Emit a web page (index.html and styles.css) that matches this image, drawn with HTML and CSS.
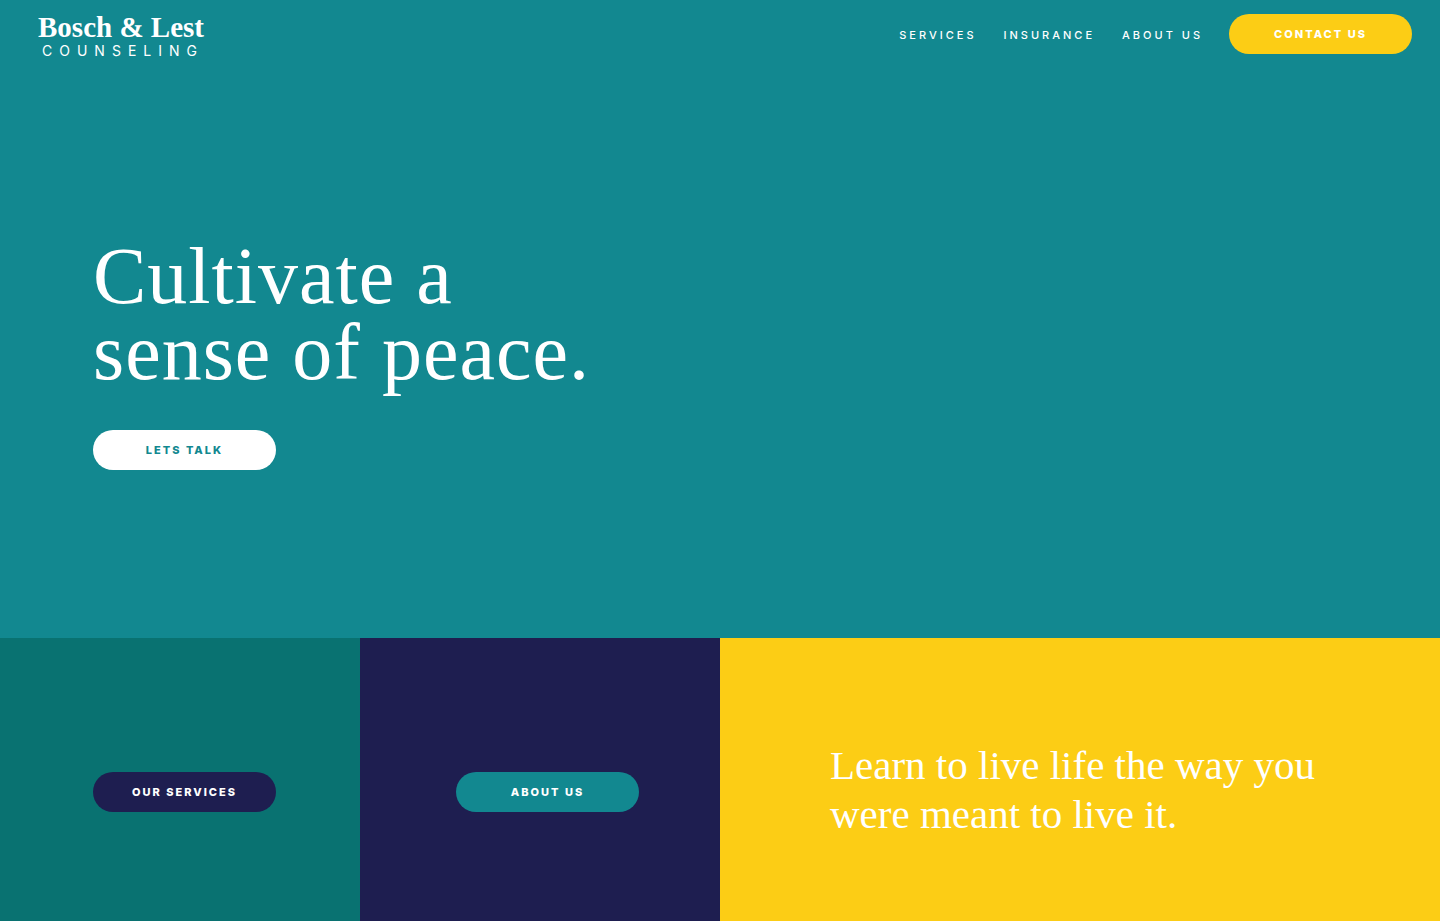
FILE: index.html
```html
<!DOCTYPE html>
<html lang="en">
<head>
    <meta charset="UTF-8">
    <meta name="viewport" content="width=device-width, initial-scale=1.0">
    <title>Bosch &amp; Lest Counseling</title>
    <link rel="stylesheet" href="styles.css">
</head>
<body>
    <section class="hero">
        <header>
            <a href="/" class="logo">
                <span class="logo-name">Bosch &amp; Lest</span>
                <span class="logo-sub">COUNSELING</span>
            </a>
            <nav id="navbar">
                <a href="#services">SERVICES</a>
                <a href="#insurance">INSURANCE</a>
                <a href="#about">ABOUT US</a>
                <button type="button" class="btn btn-yellow">CONTACT US</button>
            </nav>
        </header>
        <div class="hero-content">
            <h1>Cultivate a<br>sense of peace.</h1>
            <button type="button" class="btn btn-white">LETS TALK</button>
        </div>
    </section>

    <section class="tiles">
        <div class="tile tile-services">
            <button type="button" class="btn btn-navy">OUR SERVICES</button>
        </div>
        <div class="tile tile-about">
            <button type="button" class="btn btn-teal">ABOUT US</button>
        </div>
        <div class="tile tile-quote">
            <p>Learn to live life the way you<br>were meant to live it.</p>
        </div>
    </section>
</body>
</html>
```
FILE: styles.css
```css
* {
    box-sizing: border-box;
}
body {
    margin: 0;
    min-height: 100vh;
    display: flex;
    flex-direction: column;
    font-family: Inter, "Liberation Sans", sans-serif;
    color: #fff;
    background-color: #128890;
}
a {
    color: #fff;
    text-decoration: none;
}
.hero {
    flex: 1;
    display: flex;
    flex-direction: column;
    background-color: #128890;
}
header {
    display: flex;
    justify-content: space-between;
    align-items: flex-start;
    padding: 14px 28px 0 38px;
}
.logo {
    display: flex;
    flex-direction: column;
}
.logo-name {
    font-family: "Liberation Serif", "Times New Roman", serif;
    font-size: 29px;
    font-weight: bold;
    line-height: 26px;
}
.logo-sub {
    padding-left: 4px;
    font-size: 14px;
    line-height: 22px;
    letter-spacing: 7px;
}
#navbar {
    display: flex;
    align-items: center;
    gap: 26px;
    font-size: 11px;
    font-weight: 500;
    letter-spacing: 3px;
}
#navbar a {
    padding: 2px 0 0 1px;
}
.btn {
    width: 183px;
    height: 40px;
    padding: 0;
    border: none;
    border-radius: 20px;
    color: #fff;
    font-family: Inter, "Liberation Sans", sans-serif;
    font-size: 11px;
    font-weight: 800;
    letter-spacing: 2px;
    cursor: pointer;
}
.btn-yellow {
    background-color: #fccd15;
}
.btn-white {
    background-color: #fff;
    color: #128890;
}
.btn-navy {
    background-color: #1e1e50;
}
.btn-teal {
    background-color: #128890;
}
.hero-content {
    padding: 176px 93px 0;
}
h1 {
    margin: 0 0 40px;
    font-family: "Liberation Serif", "Times New Roman", serif;
    font-size: 80px;
    font-weight: normal;
    line-height: 76px;
    letter-spacing: 1px;
}
.tiles {
    display: grid;
    grid-template-columns: 1fr 1fr 2fr;
    min-height: 283px;
}
.tile {
    display: flex;
    align-items: center;
    padding-top: 24px;
}
.tile-services {
    padding-left: 93px;
    background-color: #097271;
}
.tile-about {
    padding-left: 96px;
    background-color: #1e1e50;
}
.tile-quote {
    padding-left: 110px;
    padding-bottom: 4px;
    background-color: #fccd15;
}
.tile-quote p {
    margin: 0;
    font-family: "Liberation Serif", "Times New Roman", serif;
    font-size: 41px;
    line-height: 49px;
}
```
